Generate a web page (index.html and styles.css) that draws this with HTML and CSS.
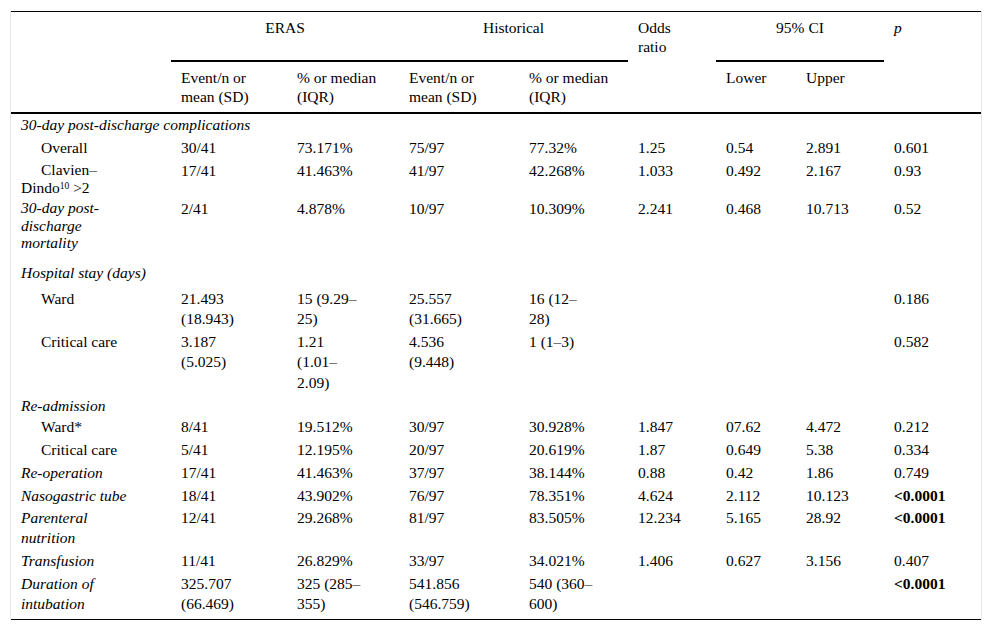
FILE: index.html
```html
<!DOCTYPE html>
<html lang="en">
<head>
<meta charset="utf-8">
<title>Outcomes table</title>
<link rel="stylesheet" href="styles.css">
</head>
<body>
<div class="wrap">
<table class="data">
  <colgroup>
    <col class="c1"><col class="c2"><col class="c3"><col class="c4"><col class="c5"><col class="c6"><col class="c7"><col class="c8"><col class="c9">
  </colgroup>
  <thead>
    <tr class="h1">
      <th rowspan="2"></th>
      <th colspan="2" class="grp">ERAS</th>
      <th colspan="2" class="grp">Historical</th>
      <th rowspan="2">Odds ratio</th>
      <th colspan="2" class="grp">95% CI</th>
      <th rowspan="2"><em>p</em></th>
    </tr>
    <tr class="h2">
      <th>Event/n or mean (SD)</th>
      <th>% or median (IQR)</th>
      <th>Event/n or mean (SD)</th>
      <th>% or median (IQR)</th>
      <th>Lower</th>
      <th>Upper</th>
    </tr>
  </thead>
  <tbody>
    <tr><td colspan="9" class="sec"><em>30-day post-discharge complications</em></td></tr>
    <tr><td class="ind">Overall</td><td>30/41</td><td>73.171%</td><td>75/97</td><td>77.32%</td><td>1.25</td><td>0.54</td><td>2.891</td><td>0.601</td></tr>
    <tr class="r-clav"><td class="ind lbl">Clavien–Dindo<sup>10</sup> &gt;2</td><td>17/41</td><td>41.463%</td><td>41/97</td><td>42.268%</td><td>1.033</td><td>0.492</td><td>2.167</td><td>0.93</td></tr>
    <tr class="r-mort"><td class="lbl"><em>30-day post-discharge mortality</em></td><td>2/41</td><td>4.878%</td><td>10/97</td><td>10.309%</td><td>2.241</td><td>0.468</td><td>10.713</td><td>0.52</td></tr>
    <tr class="r-hosp"><td colspan="9" class="sec"><em>Hospital stay (days)</em></td></tr>
    <tr><td class="ind">Ward</td><td>21.493 (18.943)</td><td>15 (9.29–25)</td><td>25.557 (31.665)</td><td>16 (12–28)</td><td></td><td></td><td></td><td>0.186</td></tr>
    <tr class="r-cc"><td class="ind">Critical care</td><td>3.187 (5.025)</td><td>1.21 (1.01–2.09)</td><td>4.536 (9.448)</td><td>1 (1–3)</td><td></td><td></td><td></td><td>0.582</td></tr>
    <tr class="r-readm"><td colspan="9" class="sec"><em>Re-admission</em></td></tr>
    <tr><td class="ind">Ward*</td><td>8/41</td><td>19.512%</td><td>30/97</td><td>30.928%</td><td>1.847</td><td>07.62</td><td>4.472</td><td>0.212</td></tr>
    <tr><td class="ind">Critical care</td><td>5/41</td><td>12.195%</td><td>20/97</td><td>20.619%</td><td>1.87</td><td>0.649</td><td>5.38</td><td>0.334</td></tr>
    <tr><td><em>Re-operation</em></td><td>17/41</td><td>41.463%</td><td>37/97</td><td>38.144%</td><td>0.88</td><td>0.42</td><td>1.86</td><td>0.749</td></tr>
    <tr><td><em>Nasogastric tube</em></td><td>18/41</td><td>43.902%</td><td>76/97</td><td>78.351%</td><td>4.624</td><td>2.112</td><td>10.123</td><td><strong>&lt;0.0001</strong></td></tr>
    <tr><td><em>Parenteral nutrition</em></td><td>12/41</td><td>29.268%</td><td>81/97</td><td>83.505%</td><td>12.234</td><td>5.165</td><td>28.92</td><td><strong>&lt;0.0001</strong></td></tr>
    <tr><td><em>Transfusion</em></td><td>11/41</td><td>26.829%</td><td>33/97</td><td>34.021%</td><td>1.406</td><td>0.627</td><td>3.156</td><td>0.407</td></tr>
    <tr class="r-last"><td><em>Duration of intubation</em></td><td>325.707 (66.469)</td><td>325 (285–355)</td><td>541.856 (546.759)</td><td>540 (360–600)</td><td></td><td></td><td></td><td><strong>&lt;0.0001</strong></td></tr>
  </tbody>
</table>
</div>
</body>
</html>
```

FILE: styles.css
```css
html, body {
  margin: 0;
  padding: 0;
  background: #ffffff;
}

body {
  font-family: "Liberation Serif", "Times New Roman", serif;
  font-size: 15.5px;
  color: #000;
}

.wrap {
  margin: 11px 0 0 10px;
  width: 970px;
  border-left: 1px solid #e6e6e6;
  border-right: 1px solid #e6e6e6;
}

.data {
  width: 970px;
  table-layout: fixed;
  border-collapse: separate;
  border-spacing: 0;
  font-family: "Liberation Serif", "Times New Roman", serif;
  font-size: 15.5px;
}

.c1 { width: 160px; }
.c2 { width: 116px; }
.c3 { width: 112px; }
.c4 { width: 120px; }
.c5 { width: 109px; }
.c6 { width: 88px; }
.c7 { width: 80px; }
.c8 { width: 88px; }
.c9 { width: 97px; }

.data th {
  font-weight: normal;
  text-align: left;
  vertical-align: top;
  line-height: 19px;
  padding: 6px 10px 0 10px;
}

.data thead tr.h1 th {
  border-top: 1px solid #000;
}

.data thead tr.h1 th[rowspan] {
  padding-right: 34px;
  border-bottom: 2px solid #000;
}

.data thead tr.h1 th.grp {
  text-align: center;
  padding: 6px 10px 23px 10px;
  border-bottom: 2px solid #000;
}

.data thead tr.h2 th {
  padding: 5.5px 10px 6.5px 10px;
  border-bottom: 2px solid #000;
}

.data td {
  vertical-align: top;
  line-height: 20px;
  padding: 1.35px 34px 1.35px 10px;
}

.data td.sec {
  padding-right: 10px;
}

.data td.ind {
  text-indent: 20px;
}

.data sup {
  font-size: 9.5px;
  line-height: 0;
  vertical-align: 4px;
}

.data strong {
  font-weight: bold;
}

.r-clav td.lbl {
  line-height: 18px;
}

.r-mort td.lbl {
  line-height: 17.5px;
  padding-bottom: 10px;
}

.r-hosp td {
  padding-bottom: 4.65px;
}

.r-cc td {
  line-height: 20.5px;
}

.r-readm td {
  padding-bottom: 0;
}

.r-last td {
  padding-bottom: 5.65px;
  border-bottom: 1px solid #000;
}
```
